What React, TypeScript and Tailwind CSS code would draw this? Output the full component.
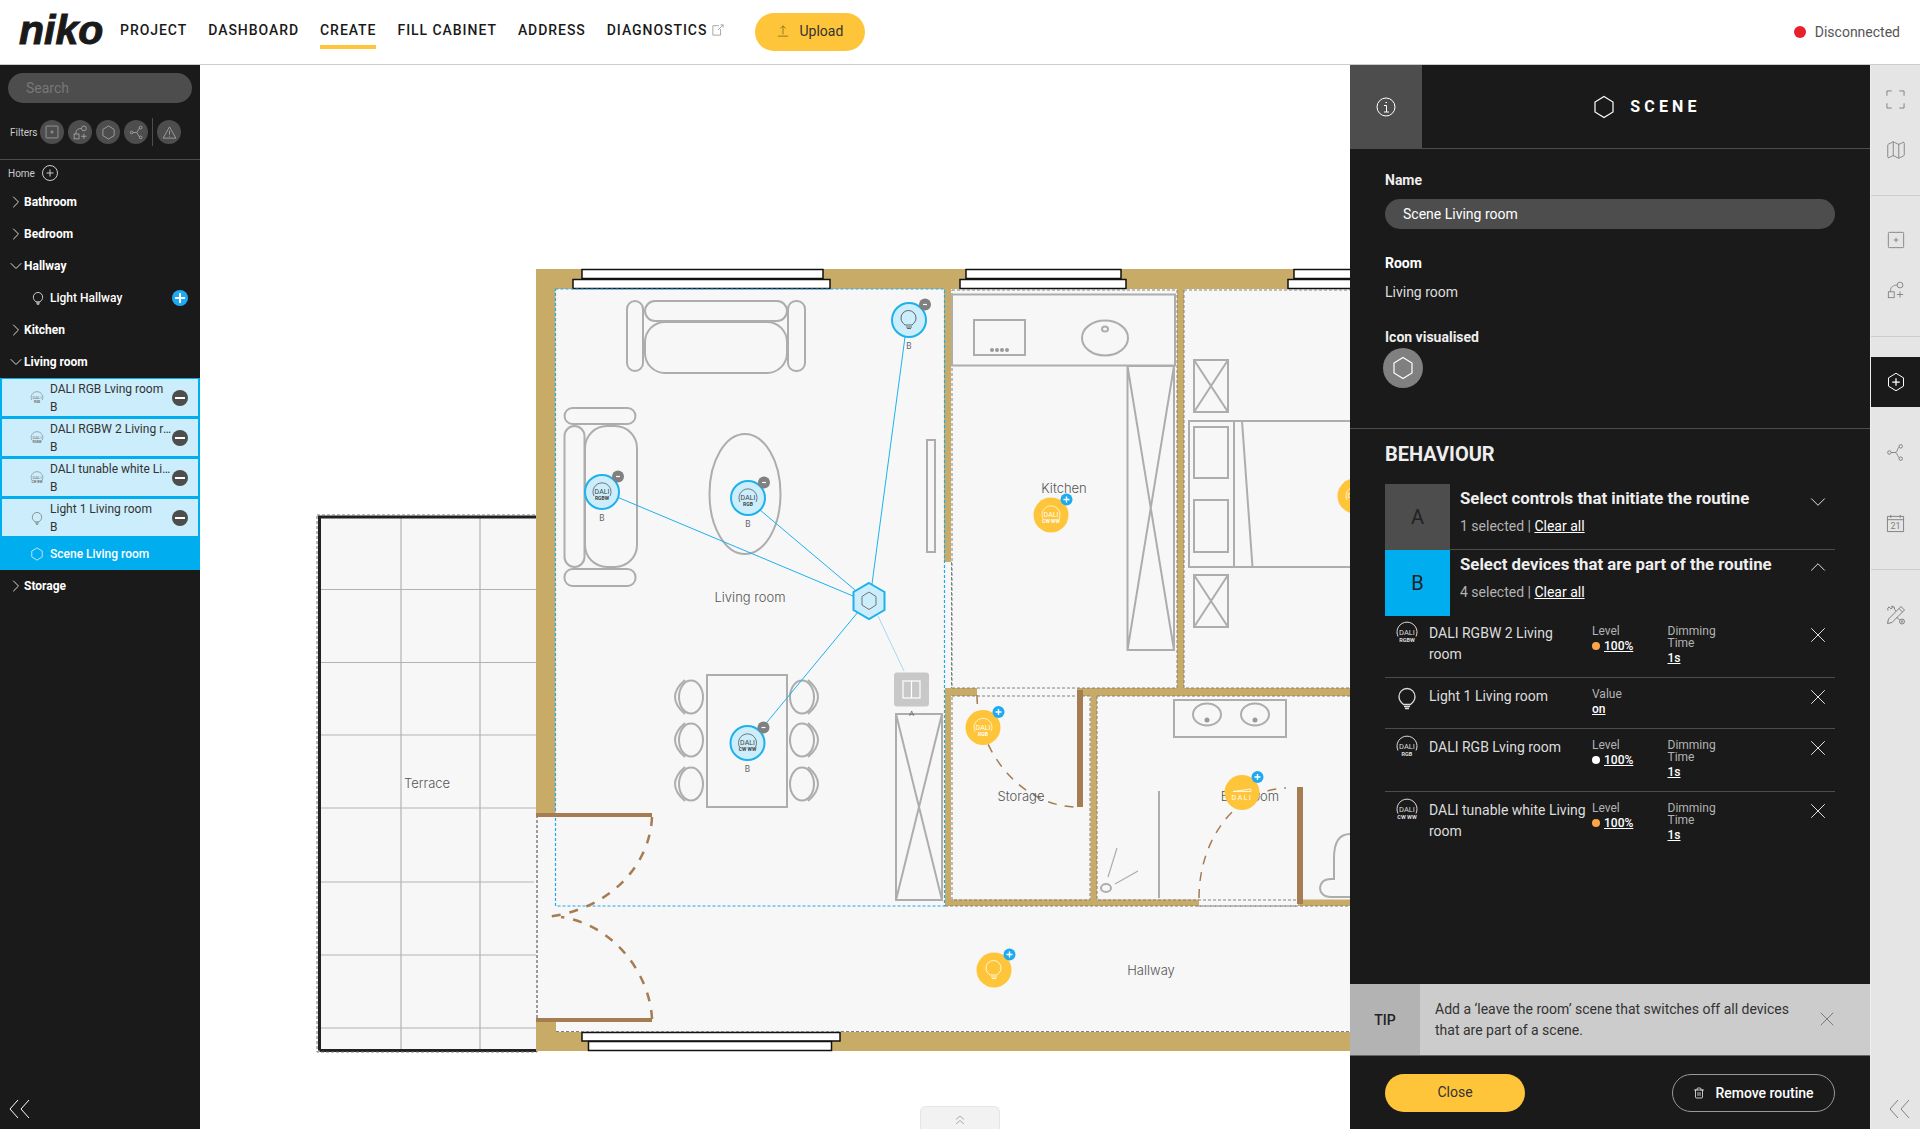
import React from 'react';
import { ChevronDown, ChevronRight, ChevronUp, Map as MapIcon, Trash2, X } from 'lucide-react';

const HexIcon = ({ className = '', children }: { className?: string; children?: React.ReactNode }) => (
  <svg viewBox="0 0 24 24" fill="none" stroke="currentColor" strokeWidth="1.2" className={className}>
    <polygon points="12,1.5 21,7 21,17 12,22.5 3,17 3,7" />
    {children}
  </svg>
);

const BulbIcon = ({ className = '' }: { className?: string }) => (
  <svg viewBox="0 0 24 24" fill="none" stroke="currentColor" strokeWidth="1.3" className={className}>
    <path d="M8.5 18.5C6 16.5 4 14 4 10.5a8 8 0 0 1 16 0c0 3.500-2 6-4.500 8z" />
    <path d="M9 20.500h6M10 22.500h4" strokeWidth="1.600" />
  </svg>
);

const DaliIcon = ({ sub, className = '' }: { sub: string; className?: string }) => (
  <svg viewBox="0 0 24 24" fill="none" className={className}>
    <path d="M3 15.500a10 10 0 1 1 18 0" stroke="currentColor" strokeWidth="1" />
    <text x="12" y="13.500" textAnchor="middle" fontSize="7.500" fill="currentColor" fontFamily="Roboto, sans-serif">DALI</text>
    <text x="12" y="20.500" textAnchor="middle" fontSize="5.500" fontWeight="700" fill="currentColor" fontFamily="Roboto, sans-serif">{sub}</text>
  </svg>
);

const PlusSquare = ({ className = '' }: { className?: string }) => (
  <svg viewBox="0 0 20 20" fill="none" stroke="currentColor" strokeWidth="1" className={className}>
    <rect x="1.500" y="1.500" width="17" height="17" rx="1" />
    <path d="M10 7.500v5M7.500 10h5" />
  </svg>
);

const ShapesPlus = ({ className = '' }: { className?: string }) => (
  <svg viewBox="0 0 20 20" fill="none" stroke="currentColor" strokeWidth="1" className={className}>
    <circle cx="14.500" cy="4.500" r="3.200" />
    <rect x="1.500" y="12" width="6.500" height="6.500" />
    <path d="M4 12V9.500C4 7 7 4.500 11.300 4.500M14.500 11.500v7M11 15h7" />
  </svg>
);

const ShareIcon = ({ className = '' }: { className?: string }) => (
  <svg viewBox="0 0 20 20" fill="none" stroke="currentColor" strokeWidth="1" className={className}>
    <circle cx="3.500" cy="10" r="1.800" />
    <circle cx="15.500" cy="3.500" r="1.800" />
    <circle cx="15.500" cy="16.500" r="1.800" />
    <path d="M5.300 10h4.200c1.500 0 2-1 2.500-2.500.4-1.400 1-3 2-3.300M9.500 10c1.500 0 2 1.500 2.700 3 .5 1 1 2.300 1.800 2.700" />
  </svg>
);

const WarnIcon = ({ className = '' }: { className?: string }) => (
  <svg viewBox="0 0 20 20" fill="none" stroke="currentColor" strokeWidth="1" className={className}>
    <path d="M10 2.500 18.500 17.500h-17zM10 7.500v5.500M10 14.500v1" />
  </svg>
);

const ToolsIcon = ({ className = '' }: { className?: string }) => (
  <svg viewBox="0 0 20 20" fill="none" stroke="currentColor" strokeWidth="1" className={className}>
    <path d="M15 1.500 18.500 5 6 17.500l-4.500 1 1-4.500z" />
    <path d="M13 3.500 16.500 7" />
    <path d="M2 5.500a3 3 0 0 1 1-3.700l1.800 2 1.500-.8L5.800 1a3.200 3.200 0 0 1 2.900 3.500L10 6M10.500 12l3 3" />
    <circle cx="16" cy="16.500" r="2.500" />
    <circle cx="16" cy="16.500" r="0.800" />
  </svg>
);

const CalendarIcon = ({ className = '' }: { className?: string }) => (
  <svg viewBox="0 0 20 20" fill="none" stroke="currentColor" strokeWidth="1" className={className}>
    <path d="M1.500 2.500h17v16h-17zM1.500 6h17M5 1v3M15 1v3" />
    <text x="10" y="16" textAnchor="middle" fontSize="9.500" stroke="none" fill="currentColor" fontFamily="Roboto, sans-serif">21</text>
  </svg>
);

const Corners = ({ className = '' }: { className?: string }) => (
  <svg viewBox="0 0 20 20" fill="none" stroke="currentColor" strokeWidth="1" className={className}>
    <path d="M1 6V1h5M14 1h5v5M19 14v5h-5M6 19H1v-5" />
  </svg>
);

const DoubleChevron = ({ className = '' }: { className?: string }) => (
  <svg viewBox="0 0 24 20" fill="none" stroke="currentColor" strokeWidth="1" className={className}>
    <path d="M10 1 2 10l8 9M21 1l-8 9 8 9" />
  </svg>
);

const FilterButton = ({ children }: { children: React.ReactNode }) => (
  <div className="w-6 h-6 rounded-full bg-[#4d4d4d] flex items-center justify-center text-[#b3b3b3]">{children}</div>
);

const Minus = () => (
  <div className="ml-auto mr-[10px] w-4 h-4 shrink-0 rounded-full bg-[#4d4d4d] flex items-center justify-center">
    <div className="w-[10px] h-[2px] bg-white" />
  </div>
);

const Room = ({ name, open }: { name: string; open?: boolean }) => (
  <div className="h-8 flex items-center pl-[6px] text-white font-bold text-xs">
    {open ? (
      <ChevronDown size={20} strokeWidth={1} className="shrink-0" />
    ) : (
      <ChevronRight size={20} strokeWidth={1} className="shrink-0" />
    )}
    <span className="-ml-[2px]">{name}</span>
  </div>
);

const DeviceRow = ({ name, icon }: { name: string; icon: React.ReactNode }) => (
  <div className="h-10 bg-[#00adef] pt-px pb-[2px] px-[2px]">
    <div className="h-full bg-[#ccedfb] flex items-center text-[#333]">
      <div className="w-[48px] pl-[28px] shrink-0 text-[#777]">{icon}</div>
      <div className="w-[122px] text-xs leading-[18px]">
        <div className="truncate">{name}</div>
        <div>B</div>
      </div>
      <Minus />
    </div>
  </div>
);

const ValueDot = ({ color }: { color: string }) => <span className={`w-2 h-2 rounded-full mr-[4px] ${color}`} />;

const LevelCol = ({ dot }: { dot: string }) => (
  <>
    <div className="w-[75.500px] mt-[2px] shrink-0 text-xs leading-3">
      <div className="text-[#b3b3b3]">Level</div>
      <div className="mt-[2px] h-[14px] flex items-center text-white font-medium">
        <ValueDot color={dot} />
        <span className="underline">100%</span>
      </div>
    </div>
    <div className="w-[100px] mt-[2px] shrink-0 text-xs leading-3">
      <div className="text-[#b3b3b3]">Dimming<br />Time</div>
      <div className="mt-[2px] h-[14px] text-white font-medium underline leading-[14px]">1s</div>
    </div>
  </>
);

const Routine = ({
  letter,
  title,
  selected,
  active,
}: {
  letter: string;
  title: string;
  selected: string;
  active?: boolean;
}) => (
  <div className="flex h-[66px]">
    <div
      className={`w-[65px] shrink-0 flex items-center justify-center text-xl text-[#222] ${
        active ? 'bg-[#00adef]' : 'bg-[#4d4d4d]'
      }`}
    >
      {letter}
    </div>
    <div className={`relative flex-1 pl-[10px] ${active ? '' : 'border-b border-[#4d4d4d]'}`}>
      <div className="mt-[3px] h-[22px] text-[16.800px] font-bold text-[#eee] leading-[22px]">{title}</div>
      {active ? (
        <ChevronUp size={26} strokeWidth={0.8} className="absolute right-[4px] top-[4px] text-white" />
      ) : (
        <ChevronDown size={26} strokeWidth={0.8} className="absolute right-[4px] top-[5px] text-white" />
      )}
      <div className="mt-[7px] text-sm leading-5 text-[#b3b3b3]">
        {selected} | <span className="text-white underline">Clear all</span>
      </div>
    </div>
  </div>
);

const Row = ({
  height,
  icon,
  name,
  border,
  children,
}: {
  height: string;
  icon: React.ReactNode;
  name: React.ReactNode;
  border?: boolean;
  children: React.ReactNode;
}) => (
  <div className={`flex pt-2 ${height} ${border ? 'border-t border-[#4d4d4d]' : ''}`}>
    <div className="w-11 shrink-0 pl-[10px] text-[#ddd]">{icon}</div>
    <div className="w-[163px] shrink-0 pr-[5px] text-sm leading-[21px] text-[#ddd]">{name}</div>
    {children}
  </div>
);

const RowClose = () => <X size={26} strokeWidth={0.8} className="absolute right-[4px] top-[7px] text-white" />;

const NAV = ['PROJECT', 'DASHBOARD', 'CREATE', 'FILL CABINET', 'ADDRESS', 'DIAGNOSTICS'];

const Chair = ({ x, y, flip }: { x: number; y: number; flip?: boolean }) => (
  <g>
    <ellipse cx={x} cy={y} rx="12" ry="16.500" />
    <path d={flip ? `M${x + 6} ${y - 17}Q${x + 26} ${y} ${x + 6} ${y + 17}` : `M${x - 6} ${y - 17}Q${x - 26} ${y} ${x - 6} ${y + 17}`} />
  </g>
);

const Node = ({
  x,
  y,
  kind,
  sub,
  selected,
  label,
}: {
  x: number;
  y: number;
  kind: 'dali' | 'bulb' | 'wedge';
  sub?: string;
  selected?: boolean;
  label?: string;
}) => {
  const ink = selected ? '#444' : '#fff';
  return (
    <g fontFamily="Roboto, sans-serif">
      <circle
        cx={x}
        cy={y}
        r={selected ? 17 : 17.500}
        fill={selected ? '#ccedfb' : '#ffc53a'}
        stroke={selected ? '#1eb1ec' : 'none'}
        strokeWidth="2"
      />
      {kind === 'dali' && (
        <g fill="none" stroke={ink} strokeWidth="0.700">
          <path d={`M${x - 8} ${y + 4}a9 9 0 1 1 16 0`} />
          <text x={x} y={y + 2} textAnchor="middle" fontSize="7" fill={ink} stroke="none">DALI</text>
          <text x={x} y={y + 8} textAnchor="middle" fontSize="5" fontWeight="700" fill={ink} stroke="none">{sub}</text>
        </g>
      )}
      {kind === 'bulb' && (
        <g fill="none" stroke={ink} strokeWidth="0.800">
          <path d={`M${x - 3.500} ${y + 6}c-2-2-4-3.500-4-7a7.500 7.500 0 0 1 15 0c0 3.500-2 5-4 7z`} transform="translate(-0.500 -1)" />
          <path d={`M${x - 3} ${y + 7}h6M${x - 2} ${y + 8.500}h4`} />
        </g>
      )}
      {kind === 'wedge' && (
        <g fill="none" stroke={ink} strokeWidth="0.800">
          <path d={`M${x - 9} ${y - 1}L${x + 9} ${y - 3.500}V${y - 1}z`} />
          <text x={x} y={y + 7} textAnchor="middle" fontSize="7" letterSpacing="1.500" fill={ink} stroke="none">DALI</text>
        </g>
      )}
      {selected ? (
        <g>
          <circle cx={x + 16} cy={y - 15.500} r="6" fill="#808080" />
          <path d={`M${x + 14} ${y - 15.500}h4`} stroke="#fff" strokeWidth="1.200" />
        </g>
      ) : (
        <g>
          <circle cx={x + 15.500} cy={y - 15.500} r="6" fill="#1eaaf1" />
          <path d={`M${x + 12.500} ${y - 15.500}h6M${x + 15.500} ${y - 18.500}v6`} stroke="#fff" strokeWidth="1.400" />
        </g>
      )}
      {label && (
        <text x={x} y={y + 29} textAnchor="middle" fontSize="8.500" fill="#666">{label}</text>
      )}
    </g>
  );
};

const FloorPlan = () => (
  <svg viewBox="200 65 1150 1064" className="block w-full h-full">
    {/* floors */}
    <rect x="317" y="516" width="220" height="536" fill="#f7f7f7" />
    <rect x="536" y="269" width="814" height="782" fill="#f7f7f7" />

    {/* terrace */}
    <g stroke="#b3b3b3" strokeWidth="1.200" fill="none">
      <path d="M401 517v535M480 517v533M321 589.500h215M321 662.500h215M321 735h215M321 808h215M321 882h213M321 955h215M321 1028h215" />
    </g>
    <path d="M319.500 1050.500V517h217M319.500 1050.500h217" stroke="#222" strokeWidth="3" fill="none" />
    <rect x="317" y="515" width="220" height="537" stroke="#777" strokeDasharray="3 2" fill="none" />

    {/* walls */}
    <g fill="#c8ab66">
      <rect x="536" y="269" width="814" height="20" />
      <rect x="536" y="269" width="19.500" height="546" />
      <rect x="536" y="1032" width="814" height="19" />
      <rect x="536" y="1020" width="20" height="31" />
      <rect x="944" y="289" width="7" height="273" />
      <rect x="945" y="688" width="6" height="218" />
      <rect x="945" y="688" width="32" height="8" />
      <rect x="1077" y="688" width="273" height="8" />
      <rect x="1177" y="289" width="7" height="400" />
      <rect x="1090.500" y="690" width="6.500" height="216" />
      <rect x="945" y="899.500" width="254" height="6.500" />
      <rect x="1298" y="899.500" width="52" height="6.500" />
    </g>

    {/* windows */}
    <g fill="#fff" stroke="#111" strokeWidth="1.500">
      <rect x="582" y="269.500" width="241" height="9" />
      <rect x="573" y="279.500" width="257" height="9" />
      <rect x="966" y="269.500" width="155" height="9" />
      <rect x="960" y="279.500" width="166" height="9" />
      <rect x="1294" y="269.500" width="70" height="9" />
      <rect x="1288" y="279.500" width="70" height="9" />
      <rect x="582" y="1032.500" width="258" height="8.500" />
      <rect x="588.500" y="1041.500" width="243" height="9" />
    </g>

    {/* room outlines */}
    <g fill="none" stroke="#808080" strokeWidth="1" strokeDasharray="3 2">
      <path d="M951.500 562v126" />
      <path d="M952 290h225v398H952zM1184 290h166M1184 290v398h166" />
      <path d="M952 696h138v204H952zM1097 696h253M1097 696v204h101M1198 900h100" />
      <path d="M1198 906h100" />
      <path d="M945 906h405M537 815v205M556 1031.500h794M537 1020h19" />
    </g>
    <rect x="555.500" y="289" width="389" height="617" fill="none" stroke="#1eaaf1" strokeWidth="1.200" strokeDasharray="3 2" />

    {/* doors */}
    <g fill="none" stroke="#a67c52">
      <path d="M536 815h116M536 1020h116" strokeWidth="4" />
      <path d="M652 817C650 865 610 910 546 917M652 1019C650 975 615 925 561 917" strokeWidth="2.500" strokeDasharray="9 9" />
      <path d="M1080 690v117M1300 787v117" strokeWidth="6" />
      <path d="M977 695C977 755 1025 807 1077 807" strokeWidth="1.500" strokeDasharray="9 8" />
      <path d="M1199 898C1199 840 1235 790 1286 788" strokeWidth="1.500" strokeDasharray="9 8" />
    </g>

    {/* furniture */}
    <g fill="none" stroke="#adadad" strokeWidth="2">
      <rect x="627" y="301" width="16" height="70" rx="8" />
      <rect x="788" y="301" width="17" height="70" rx="8" />
      <rect x="645" y="301" width="142" height="20" rx="10" />
      <rect x="645" y="322" width="142" height="51" rx="20" />
      <rect x="564.500" y="408" width="71" height="16" rx="8" />
      <rect x="564.500" y="569" width="71" height="17" rx="8" />
      <rect x="564.500" y="426" width="20" height="141" rx="10" />
      <rect x="585" y="426" width="52" height="141" rx="22" />
      <ellipse cx="745" cy="494" rx="35.500" ry="60" />
      <rect x="927" y="440" width="8" height="112" />
      <rect x="707" y="675" width="80" height="132" />
      <Chair x={691} y={697} />
      <Chair x={691} y={740} />
      <Chair x={691} y={784} />
      <Chair x={802} y={697} flip />
      <Chair x={802} y={740} flip />
      <Chair x={802} y={784} flip />
      <path d="M896 714h46v186h-46zM896 714l46 186M942 714l-46 186" />

      <rect x="952" y="294.500" width="223" height="71" />
      <rect x="974" y="320" width="51" height="35" />
      <ellipse cx="1105" cy="338" rx="23" ry="17.500" />
      <ellipse cx="1105" cy="329" rx="3" ry="2.500" />
      <path d="M1127.500 366h46.500v284h-46.500zM1127.500 366l46.500 284M1174 366l-46.500 284" />
      <path d="M1194 360h34v52h-34zM1194 360l34 52M1228 360l-34 52M1194 575h34v52h-34zM1194 575l34 52M1228 575l-34 52" />
      <path d="M1350 421h-161v146h161M1234 421v146M1242 421l10.500 146" />
      <rect x="1194" y="427" width="34" height="51" />
      <rect x="1194" y="500" width="34" height="52" />

      <rect x="1174" y="700" width="112" height="37" />
      <ellipse cx="1207" cy="714.500" rx="14" ry="11" />
      <ellipse cx="1255" cy="714.500" rx="14" ry="11" />
      <path d="M1159 791v107" />
      <ellipse cx="1106" cy="888" rx="5" ry="4" />
      <path d="M1108 877l9-29M1115 884l23-13" strokeWidth="1.200" />
      <path d="M1350 834c-12 0-16 10-16 24v21h-3c-8 0-11 5-11 9s3 9 11 9h19" />
    </g>
    <g fill="#999">
      <circle cx="1207" cy="720" r="2.500" />
      <circle cx="1255" cy="720" r="2.500" />
      <circle cx="992" cy="350" r="2" />
      <circle cx="997" cy="350" r="2" />
      <circle cx="1002" cy="350" r="2" />
      <circle cx="1007" cy="350" r="2" />
    </g>

    {/* room labels */}
    <g fontFamily="Inter, sans-serif" fontSize="13" fontWeight="300" fill="#555" textAnchor="middle">
      <text x="427" y="788">Terrace</text>
      <text x="750" y="602">Living room</text>
      <text x="1064" y="493">Kitchen</text>
      <text x="1021" y="801">Storage</text>
      <text x="1250" y="801">Bathroom</text>
      <text x="1151" y="975">Hallway</text>
    </g>

    {/* links */}
    <g stroke="#1eb1ec" strokeWidth="1" fill="none">
      <path d="M905 337 872 584M617 497 853 596M760 510 855 590M858 612 763 727" />
      <path d="M878 616 904 671" strokeOpacity="0.400" />
    </g>

    {/* switch */}
    <rect x="894" y="672.500" width="35" height="34" rx="3" fill="#c8c8c8" />
    <rect x="903" y="681" width="17" height="17" fill="none" stroke="#fff" strokeWidth="1.200" />
    <path d="M911.500 681v17" stroke="#fff" strokeWidth="1.200" />
    <text x="911.500" y="716" textAnchor="middle" fontSize="8" fill="#666" fontFamily="Roboto, sans-serif">A</text>

    {/* scene */}
    <polygon points="869,583 884.500,592 884.500,610 869,619 853.500,610 853.500,592" fill="#ccedfb" stroke="#1eb1ec" strokeWidth="2" />
    <polygon points="869,592 876,596.500 876,605 869,609.500 862,605 862,596.500" fill="none" stroke="#555" strokeWidth="0.800" />

    {/* devices */}
    <Node x={909} y={320} kind="bulb" selected label="B" />
    <Node x={602} y={492} kind="dali" sub="RGBW" selected label="B" />
    <Node x={748} y={498} kind="dali" sub="RGB" selected label="B" />
    <Node x={747.500} y={743} kind="dali" sub="CW WW" selected label="B" />
    <Node x={1051} y={515} kind="dali" sub="CW WW" />
    <Node x={983} y={727.500} kind="dali" sub="RGB" />
    <Node x={1242} y={792.500} kind="wedge" />
    <Node x={994} y={970} kind="bulb" />
    <Node x={1355} y={496} kind="dali" sub="RGB" />
  </svg>
);

export default function App() {
  return (
    <div className="w-[1920px] h-[1129px] overflow-hidden flex flex-col bg-white font-['Roboto',sans-serif]">
      <header className="h-[65px] shrink-0 border-b border-[#ccc] flex items-center bg-white">
        <div className="w-[120px] pl-[19px] text-[41px] leading-none font-black italic text-[#1a1a1a] font-['Liberation_Sans',sans-serif] -mt-[3px] [-webkit-text-stroke:1px_#1a1a1a]">
          niko
        </div>
        <nav className="flex gap-[21px] h-full">
          {NAV.map((item) => (
            <div key={item} className="relative flex items-center gap-[5px] pb-1 text-sm font-medium tracking-[0.950px] text-[#1a1a1a]">
              {item}
              {item === 'DIAGNOSTICS' && (
                <svg viewBox="0 0 14 14" fill="none" stroke="#999" strokeWidth="1" className="w-3 h-3">
                  <path d="M8 2H1v11h9V6M7 7l6-6M10 1h3v3" />
                </svg>
              )}
              {item === 'CREATE' && <div className="absolute left-0 right-0 top-[45px] h-1 bg-[#ffc53a]" />}
            </div>
          ))}
        </nav>
        <button className="ml-[31px] w-[110px] h-[38px] rounded-full bg-[#ffc53a] flex items-center justify-center gap-[10px] pb-[2px] text-sm text-[#333]">
          <svg viewBox="0 0 14 14" fill="none" stroke="#8a6d1f" strokeWidth="1" className="w-3 h-[14px]">
            <path d="M7 11V1M4 4l3-3 3 3M1 13h12" />
          </svg>
          Upload
        </button>
        <div className="ml-auto mr-5 flex items-center gap-[9px] text-sm text-[#555]">
          <span className="w-3 h-3 rounded-full bg-[#e6212a]" />
          Disconnected
        </div>
      </header>

      <div className="flex-1 flex min-h-0">
        {/* tree */}
        <aside className="w-[200px] shrink-0 bg-[#1a1a1a] flex flex-col">
          <div className="h-[95px] shrink-0 border-b border-[#4d4d4d] pt-2 px-2">
            <div className="h-[30px] rounded-full bg-[#4d4d4d] pl-[18px] flex items-center text-sm text-[#777]">Search</div>
            <div className="flex items-center mt-[17px] pl-[2px] h-6">
              <span className="text-[10px] text-[#ccc] w-[30px]">Filters</span>
              <div className="flex gap-1">
                <FilterButton><PlusSquare className="w-[14px] h-[14px]" /></FilterButton>
                <FilterButton><ShapesPlus className="w-[15px] h-[15px]" /></FilterButton>
                <FilterButton><HexIcon className="w-[15px] h-[15px]" /></FilterButton>
                <FilterButton><ShareIcon className="w-[15px] h-[15px]" /></FilterButton>
              </div>
              <div className="w-px h-7 bg-[#4d4d4d] ml-[4px] mr-[4px]" />
              <FilterButton><WarnIcon className="w-[15px] h-[15px]" /></FilterButton>
            </div>
          </div>
          <div className="h-[26px] flex items-center pl-2 text-[10px] text-[#ccc] gap-[7px]">
            Home
            <svg viewBox="0 0 16 16" fill="none" stroke="#ccc" strokeWidth="1" className="w-4 h-4">
              <circle cx="8" cy="8" r="7.500" />
              <path d="M8 4.500v7M4.500 8h7" />
            </svg>
          </div>
          <Room name="Bathroom" />
          <Room name="Bedroom" />
          <Room name="Hallway" open />
          <div className="h-8 flex items-center text-xs font-medium text-white">
            <BulbIcon className="ml-[31px] w-[14px] h-[14px] mr-[5px]" />
            Light Hallway
            <div className="ml-auto mr-3 w-4 h-4 rounded-full bg-[#1eaaf1] flex items-center justify-center">
              <svg viewBox="0 0 16 16" stroke="#fff" strokeWidth="2" className="w-4 h-4"><path d="M3 8h10M8 3v10" /></svg>
            </div>
          </div>
          <Room name="Kitchen" />
          <Room name="Living room" open />
          <DeviceRow name="DALI RGB Lving room" icon={<DaliIcon sub="RGB" className="w-[14px] h-[14px]" />} />
          <DeviceRow name="DALI RGBW 2 Living room" icon={<DaliIcon sub="RGBW" className="w-[14px] h-[14px]" />} />
          <DeviceRow name="DALI tunable white Living room" icon={<DaliIcon sub="CW WW" className="w-[14px] h-[14px]" />} />
          <DeviceRow name="Light 1 Living room" icon={<BulbIcon className="w-[14px] h-[14px]" />} />
          <div className="h-8 bg-[#00adef] flex items-center text-xs font-medium text-white">
            <HexIcon className="ml-[30px] w-[14px] h-[14px] mr-[6px]" />
            Scene Living room
          </div>
          <Room name="Storage" />
          <DoubleChevron className="mt-auto mb-[10px] ml-[8px] w-6 h-5 text-white" />
        </aside>

        {/* floor plan */}
        <main className="relative flex-1 min-w-0 bg-white overflow-hidden">
          <FloorPlan />
          <div className="absolute left-[720px] bottom-0 w-20 h-[23px] bg-[#f2f2f2] border border-b-0 border-[#e5e5e5] rounded-t-md flex justify-center pt-2">
            <svg viewBox="0 0 10 10" fill="none" stroke="#aaa" strokeWidth="1" className="w-[10px] h-[10px]">
              <path d="M1 4.500 5 1l4 3.500M1 9l4-3.500L9 9" />
            </svg>
          </div>
        </main>

        {/* details */}
        <section className="w-[520px] shrink-0 bg-[#1a1a1a] flex flex-col">
          <div className="h-[84px] shrink-0 flex border-b border-[#4d4d4d]">
            <div className="w-[72px] bg-[#4d4d4d] flex items-center justify-center">
              <svg viewBox="0 0 20 20" fill="none" stroke="#fff" strokeWidth="1" className="w-5 h-5">
                <circle cx="10" cy="10" r="9" />
                <path d="M8 8.500h2.500V15M8 15h5M9.500 5.500h1.500" />
              </svg>
            </div>
            <div className="flex-1 flex items-center justify-center gap-[14px] pl-[1px] text-white">
              <HexIcon className="w-6 h-6" />
              <span className="text-base font-bold tracking-[0.260em]">SCENE</span>
            </div>
          </div>

          <div className="px-[35px] pt-[21px] pb-10 border-b border-[#4d4d4d]">
            <div className="text-sm font-bold leading-5 text-[#eee]">Name</div>
            <div className="mt-[9px] h-[30px] rounded-full bg-[#4d4d4d] pl-[18px] pb-px flex items-center text-sm text-white">
              Scene Living room
            </div>
            <div className="mt-6 text-sm font-bold leading-5 text-white">Room</div>
            <div className="mt-[9px] text-sm leading-5 text-[#ddd]">Living room</div>
            <div className="mt-[25px] text-sm font-bold leading-5 text-[#eee]">Icon visualised</div>
            <div className="mt-px -ml-[2px] w-10 h-10 rounded-full bg-[#808080] flex items-center justify-center text-white">
              <HexIcon className="w-6 h-6" />
            </div>
          </div>

          <div className="px-[35px] pt-[11px]">
            <div className="text-xl font-bold leading-7 text-[#eee]">BEHAVIOUR</div>
            <div className="mt-4">
              <Routine letter="A" title="Select controls that initiate the routine" selected="1 selected" />
              <Routine letter="B" title="Select devices that are part of the routine" selected="4 selected" active />
            </div>
            <div className="-mt-px">
              <div className="relative">
                <Row height="h-[62px]" icon={<DaliIcon sub="RGBW" className="w-6 h-6 -mt-[2px]" />} name="DALI RGBW 2 Living room">
                  <LevelCol dot="bg-[#ffa347]" />
                </Row>
                <RowClose />
              </div>
              <div className="relative">
                <Row height="h-[51px]" border icon={<BulbIcon className="w-6 h-6" />} name="Light 1 Living room">
                  <div className="mt-[2px] text-xs leading-3">
                    <div className="text-[#b3b3b3]">Value</div>
                    <div className="mt-[2px] h-[14px] leading-[14px] text-white font-medium underline">on</div>
                  </div>
                </Row>
                <RowClose />
              </div>
              <div className="relative">
                <Row height="h-[63px]" border icon={<DaliIcon sub="RGB" className="w-6 h-6 -mt-[2px]" />} name="DALI RGB Lving room">
                  <LevelCol dot="bg-white" />
                </Row>
                <RowClose />
              </div>
              <div className="relative">
                <Row height="h-[63px]" border icon={<DaliIcon sub="CW WW" className="w-6 h-6 -mt-[2px]" />} name="DALI tunable white Living room">
                  <LevelCol dot="bg-[#ffa347]" />
                </Row>
                <RowClose />
              </div>
            </div>
          </div>

          <div className="mt-auto h-[72px] shrink-0 flex bg-[#ccc] border-b border-[#666]">
            <div className="w-[70px] bg-[#b3b3b3] flex items-center justify-center text-sm font-medium text-[#222]">TIP</div>
            <div className="w-[384px] pl-[15px] pt-[15px] text-sm leading-[21px] text-[#333]">
              Add a ‘leave the room’ scene that switches off all devices that are part of a scene.
            </div>
            <X size={24} strokeWidth={0.8} className="ml-[11px] mt-[23px] text-[#666]" />
          </div>
          <div className="h-[73px] shrink-0 px-[35px] pt-[18px] flex justify-between">
            <button className="w-[140px] h-[38px] rounded-full bg-[#ffc53a] pb-[2px] text-sm text-[#333]">Close</button>
            <button className="w-[163px] h-[38px] rounded-full border border-[#999] flex items-center justify-center gap-[10px] pb-px text-sm font-medium text-white">
              <Trash2 size={12} strokeWidth={1.500} />
              Remove routine
            </button>
          </div>
        </section>

        {/* tools */}
        <aside className="w-[50px] shrink-0 bg-[#e5e5e5] border-l border-[#eee] flex flex-col text-[#808080]">
          <div className="h-[131px] shrink-0 border-b border-[#ccc] flex flex-col items-center pt-[25px] gap-[30px]">
            <Corners className="w-[19px] h-[19px]" />
            <MapIcon size={22} strokeWidth={1} />
          </div>
          <div className="h-[141px] shrink-0 border-b border-[#ccc] flex flex-col items-center pt-[35px] gap-8">
            <PlusSquare className="w-[18px] h-[18px]" />
            <ShapesPlus className="w-5 h-[18px]" />
          </div>
          <div className="h-[233px] shrink-0 border-b border-[#ccc] flex flex-col items-center pt-5">
            <div className="w-full h-[50px] bg-[#1a1a1a] flex items-center justify-center text-white">
              <HexIcon className="w-5 h-5">
                <path d="M12 7.500v9M7.500 12h9" strokeWidth="1.500" />
              </HexIcon>
            </div>
            <ShareIcon className="mt-9 w-[19px] h-[19px]" />
            <CalendarIcon className="mt-[52px] w-[19px] h-[19px]" />
          </div>
          <div className="flex flex-col items-center pt-[35px]">
            <ToolsIcon className="w-5 h-5" />
          </div>
          <DoubleChevron className="mt-auto mb-[10px] ml-[17px] w-6 h-5 text-[#808080]" />
        </aside>
      </div>
    </div>
  );
}
